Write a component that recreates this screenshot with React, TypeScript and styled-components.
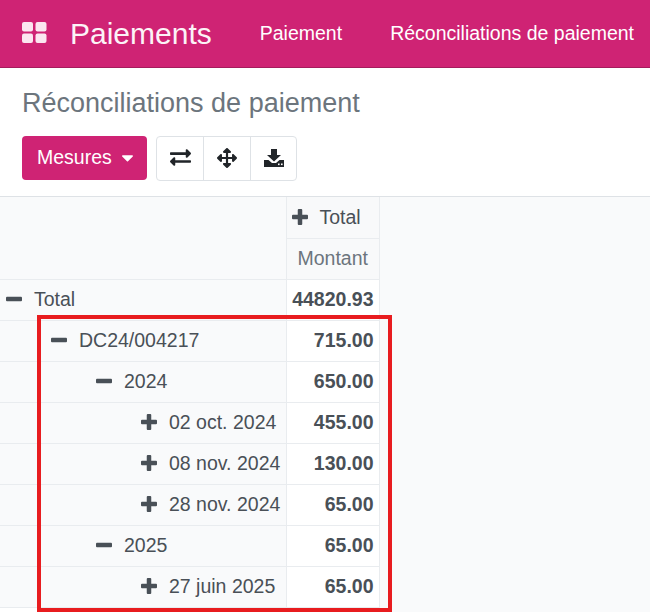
import React from "react";
import styled, { createGlobalStyle } from "styled-components";
import { FaExchangeAlt, FaArrowsAlt, FaCaretDown } from "react-icons/fa";

const Global = createGlobalStyle`
  html, body { margin: 0; padding: 0; background: #fff; }
  body { font-family: "Liberation Sans", Arial, sans-serif; }
`;
const Page = styled.div`
  position: relative;
  width: 650px;
  height: 612px;
  overflow: hidden;
  font-family: "Liberation Sans", Arial, sans-serif;
  background: #fff;
`;
const NavBar = styled.header`
  height: 67px;
  background: #cf2374;
  border-bottom: 1px solid #a51c5d;
  display: flex;
  align-items: center;
  padding-left: 22px;
  color: #fff;
  white-space: nowrap;
`;
const AppsIcon = styled.svg`
  width: 25px;
  height: 21px;
  flex: none;
  margin-top: -2px;
`;
const Brand = styled.span`
  font-size: 30px;
  margin-left: 23px;
  opacity: 0.95;
`;
const NavLink = styled.span<{ $gap: number }>`
  font-size: 19.5px;
  margin-left: ${(p) => p.$gap}px;
  margin-top: -1px;
`;
const Control = styled.section`
  height: 129px;
  box-sizing: border-box;
  padding: 20px 22px 0;
  border-bottom: 1px solid #dee2e6;
`;
const Title = styled.h1`
  margin: 0;
  font-size: 27px;
  line-height: 31px;
  font-weight: 400;
  color: #6c757d;
`;
const Tools = styled.div`
  display: flex;
  align-items: flex-start;
  gap: 9px;
  margin-top: 17px;
`;
const Primary = styled.button`
  width: 125px;
  height: 44px;
  border: 0;
  border-radius: 4px;
  background: #cf2374;
  color: #fff;
  font: 19.5px "Liberation Sans", Arial, sans-serif;
  display: flex;
  align-items: center;
  gap: 6px;
  padding: 0 0 2px 15px;
`;
const Group = styled.div`
  display: flex;
  height: 45px;
  box-sizing: border-box;
  border: 1px solid #dee2e6;
  border-radius: 4px;
  background: #fff;
`;
const IconBtn = styled.div`
  width: 46px;
  box-sizing: border-box;
  display: flex;
  align-items: center;
  justify-content: center;
  color: #212529;
  padding-bottom: 2px;
  & + & { border-left: 1px solid #dee2e6; width: 47px; }
  &:last-child { width: 46px; }
`;
const Main = styled.main`
  height: 415px;
  background: #f9fafb;
`;
const TableArea = styled.div`
  width: 380px;
  height: 100%;
  background: #fff;
`;
const Table = styled.table`
  border-collapse: collapse;
  table-layout: fixed;
  width: 379px;
  font-size: 19.5px;
  color: #495057;
`;
const Cell = styled.td`
  height: 41px;
  padding: 0;
  box-sizing: border-box;
  border-top: 1px solid #e9ecef;
  border-bottom: 1px solid #e9ecef;
  white-space: nowrap;
`;
const RowHead = styled(Cell)<{ $level: number }>`
  width: 286px;
  padding-left: ${(p) => 6 + p.$level * 45}px;
  border-right: 1px solid #e9ecef;
  background: #f9fafb;
  overflow: hidden;
`;
const Empty = styled(Cell)`
  width: 286px;
  border-top: 0;
  border-bottom: 0;
  border-right: 1px solid #e9ecef;
  background: #f9fafb;
`;
const ColHead = styled(Cell)<{ $muted?: boolean }>`
  width: 93px;
  background: #f8f9fa;
  border-right: 1px solid #e9ecef;
  color: ${(p) => (p.$muted ? "#6c757d" : "#495057")};
  padding-left: ${(p) => (p.$muted ? 11 : 5)}px;
  border-top-width: 0;
`;
const Value = styled(Cell)`
  width: 93px;
  background: #fff;
  border-right: 1px solid #e9ecef;
  text-align: right;
  padding-right: 5px;
  font-weight: 700;
`;
const Toggle = styled.span`
  display: inline-flex;
  width: 28px;
  vertical-align: -1px;
  align-items: center;
`;
const Annotation = styled.div`
  position: absolute;
  left: 37px;
  top: 315px;
  width: 355px;
  height: 297px;
  box-sizing: border-box;
  border: 4px solid #e81c1f;
`;

const rows = [
  { label: "DC24/004217", level: 1, open: true, v: "715.00" },
  { label: "2024", level: 2, open: true, v: "650.00" },
  { label: "02 oct. 2024", level: 3, open: false, v: "455.00" },
  { label: "08 nov. 2024", level: 3, open: false, v: "130.00" },
  { label: "28 nov. 2024", level: 3, open: false, v: "65.00" },
  { label: "2025", level: 2, open: true, v: "65.00" },
  { label: "27 juin 2025", level: 3, open: false, v: "65.00" },
];

const Mark = ({ open }: { open: boolean }) => (
  <Toggle>
    <svg width="16" height="16" viewBox="0 0 16 16" fill="#495057">
      {open ? (
        <rect x="0" y="5.75" width="16" height="4.5" rx="1" />
      ) : (
        <path d="M5.75 1a1 1 0 0 1 1-1h2.5a1 1 0 0 1 1 1v4.75H15a1 1 0 0 1 1 1v2.5a1 1 0 0 1-1 1h-4.75V15a1 1 0 0 1-1 1h-2.5a1 1 0 0 1-1-1v-4.75H1a1 1 0 0 1-1-1v-2.5a1 1 0 0 1 1-1h4.75z" />
      )}
    </svg>
  </Toggle>
);

export default function App() {
  return (
    <Page>
      <Global />
      <NavBar>
        <AppsIcon viewBox="0 0 25 21" fill="#fbe6f0">
          <rect x="0" y="0" width="11" height="9.5" rx="2" />
          <rect x="13.5" y="0" width="11" height="9.5" rx="2" />
          <rect x="0" y="11.5" width="11" height="9.5" rx="2" />
          <rect x="13.5" y="11.5" width="11" height="9.5" rx="2" />
        </AppsIcon>
        <Brand>Paiements</Brand>
        <NavLink $gap={48}>Paiement</NavLink>
        <NavLink $gap={48}>Réconciliations de paiement</NavLink>
      </NavBar>
      <Control>
        <Title>Réconciliations de paiement</Title>
        <Tools>
          <Primary>
            <span>Mesures</span>
            <FaCaretDown size={19} />
          </Primary>
          <Group>
            <IconBtn><FaExchangeAlt size={21} /></IconBtn>
            <IconBtn><FaArrowsAlt size={20} /></IconBtn>
            <IconBtn>
              <svg width="20" height="18" viewBox="0 0 20 18">
                <path fill="#212529" d="M7 0h6v6h4l-7 6.5L3 6h4z" />
                <path fill="#212529" d="M0 11h4.5l3.5 3h4l3.5-3H20v7H0z" />
                <rect x="14" y="14.5" width="1.6" height="1.6" fill="#fff" />
                <rect x="17" y="14.5" width="1.6" height="1.6" fill="#fff" />
              </svg>
            </IconBtn>
          </Group>
        </Tools>
      </Control>
      <Main>
        <TableArea>
          <Table>
            <tbody>
              <tr>
                <Empty />
                <ColHead><Mark open={false} />Total</ColHead>
              </tr>
              <tr>
                <Empty />
                <ColHead $muted>Montant</ColHead>
              </tr>
              <tr>
                <RowHead $level={0}><Mark open />Total</RowHead>
                <Value>44820.93</Value>
              </tr>
              {rows.map((r) => (
                <tr key={r.label}>
                  <RowHead $level={r.level}><Mark open={r.open} />{r.label}</RowHead>
                  <Value>{r.v}</Value>
                </tr>
              ))}
            </tbody>
          </Table>
        </TableArea>
      </Main>
      <Annotation />
    </Page>
  );
}
